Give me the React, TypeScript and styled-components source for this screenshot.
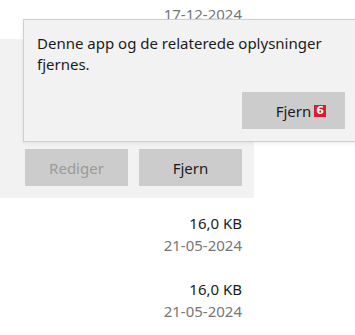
import React from 'react';
import styled, { createGlobalStyle } from 'styled-components';

const GlobalStyle = createGlobalStyle`
  html, body {
    margin: 0;
    padding: 0;
    background: #ffffff;
    overflow: hidden;
  }
  body {
    font-family: "Noto Sans", "Open Sans", sans-serif;
    font-size: 15px;
    color: #1b1b1b;
  }
`;

const Page = styled.div`
  position: relative;
  width: 355px;
  height: 335px;
  overflow: hidden;
`;

const AppRow = styled.div<{ $top?: number; $bottom?: number }>`
  width: 242px;
  display: flex;
  flex-direction: column;
  align-items: flex-end;
  margin-top: ${p => p.$top ?? 0}px;
  margin-bottom: ${p => p.$bottom ?? 0}px;
`;

const Size = styled.div`
  line-height: 22px;
  color: #1b1b1b;
`;

const Date = styled.div`
  line-height: 22px;
  color: #767676;
`;

const Expanded = styled.div`
  width: 254px;
  height: 159px;
  background: #f2f2f2;
  box-sizing: border-box;
  padding: 0 0 12px 25px;
  display: flex;
  align-items: flex-end;
  gap: 11px;
`;

const Button = styled.button<{ $disabled?: boolean }>`
  position: relative;
  width: 103px;
  height: 37px;
  border: none;
  padding: 0;
  background: #cccccc;
  font-family: "Noto Sans", "Open Sans", sans-serif;
  font-size: 15px;
  color: ${p => (p.$disabled ? '#9a9a9a' : '#1b1b1b')};
  display: flex;
  align-items: center;
  justify-content: center;
`;

const Flyout = styled.div`
  position: absolute;
  left: 23px;
  top: 19px;
  width: 345px;
  height: 123px;
  box-sizing: border-box;
  background: #f2f2f2;
  border: 1px solid #cfcfcf;
  box-shadow: 0 1px 4px rgba(0, 0, 0, 0.08);
  padding: 13px 0 0 13px;
  display: flex;
  flex-direction: column;
`;

const Message = styled.p`
  margin: 0;
  width: 300px;
  line-height: 21px;
  color: #1b1b1b;
`;

const FlyoutActions = styled.div`
  margin-top: 17px;
  padding-left: 205px;
  display: flex;
`;

const Badge = styled.span`
  position: absolute;
  left: 72px;
  top: 13px;
  width: 12px;
  height: 12px;
  background: #d81e2c;
  color: #ffffff;
  font-family: "DejaVu Sans", sans-serif;
  font-weight: 700;
  font-size: 11px;
  line-height: 12px;
  text-align: center;
`;

export default function App() {
  return (
    <Page>
      <GlobalStyle />
      <AppRow $top={-19} $bottom={14}>
        <Size>16,0 KB</Size>
        <Date>17-12-2024</Date>
      </AppRow>
      <Expanded>
        <Button $disabled>Rediger</Button>
        <Button>Fjern</Button>
      </Expanded>
      <AppRow $top={14} $bottom={22}>
        <Size>16,0 KB</Size>
        <Date>21-05-2024</Date>
      </AppRow>
      <AppRow>
        <Size>16,0 KB</Size>
        <Date>21-05-2024</Date>
      </AppRow>
      <Flyout>
        <Message>Denne app og de relaterede oplysninger fjernes.</Message>
        <FlyoutActions>
          <Button>
            Fjern
            <Badge>6</Badge>
          </Button>
        </FlyoutActions>
      </Flyout>
    </Page>
  );
}
